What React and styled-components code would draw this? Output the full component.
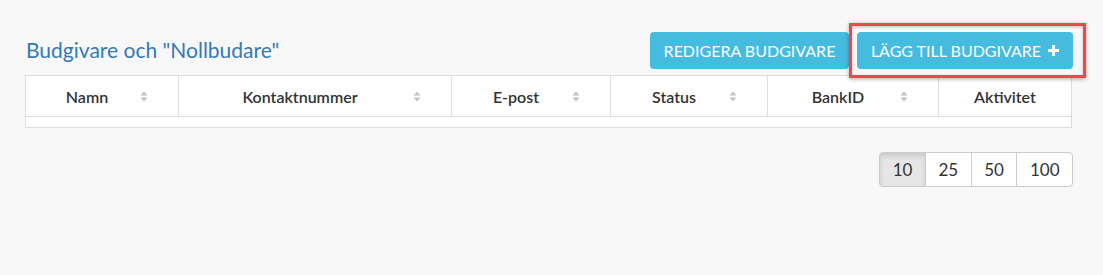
import React from 'react';
import styled, { createGlobalStyle } from 'styled-components';

const GlobalStyle = createGlobalStyle`
    body {
        margin: 0;
        background: #f8f8f8;
        font-family: Lato, "Open Sans", sans-serif;
        color: #333;
    }
`

const columns = [
    { label: 'Namn', width: 153, sortable: true },
    { label: 'Kontaktnummer', width: 273, sortable: true },
    { label: 'E-post', width: 159, sortable: true },
    { label: 'Status', width: 157, sortable: true },
    { label: 'BankID', width: 171, sortable: true },
    { label: 'Aktivitet', width: 133, sortable: false },
];

const pageSizes = [10, 25, 50, 100];

function SortIcon() {
    return (
        <SortMark width="8" height="11" viewBox="0 0 8 11">
            <path d="M4 0.5 L7.5 4.5 L0.5 4.5 Z" fill="#c4c4c4" />
            <path d="M4 10.5 L7.5 6.5 L0.5 6.5 Z" fill="#c4c4c4" />
        </SortMark>
    )
}

function App() {
    return (
        <Page>
            <GlobalStyle />
            <Toolbar>
                <Title>Budgivare och "Nollbudare"</Title>
                <Actions>
                    <ActionButton width={199}>Redigera budgivare</ActionButton>
                    <Highlighted>
                        <ActionButton width={216}>
                            Lägg till budgivare
                            <PlusIcon width="11" height="11" viewBox="0 0 11 11">
                                <path d="M4 0 H7 V4 H11 V7 H7 V11 H4 V7 H0 V4 H4 Z" fill="#fff" />
                            </PlusIcon>
                        </ActionButton>
                        <Marker />
                    </Highlighted>
                </Actions>
            </Toolbar>
            <Table>
                <thead>
                    <tr>
                        {columns.map((col) => (
                            <Th key={col.label} style={{ width: col.width }} $sortable={col.sortable}>
                                {col.label}
                                {col.sortable && <SortIcon />}
                            </Th>
                        ))}
                    </tr>
                </thead>
                <tbody>
                    <tr>
                        <EmptyCell colSpan={columns.length} />
                    </tr>
                </tbody>
            </Table>
            <Footer>
                <PageSizes>
                    {pageSizes.map((size) => (
                        <PageButton key={size} $active={size === 10}>{size}</PageButton>
                    ))}
                </PageSizes>
            </Footer>
        </Page>
    )
}

export default App

const Page = styled.div`
    width: 1047px;
    padding: 32px 0 0 25px;
    height: 243px;
`

const Toolbar = styled.div`
    display: flex;
    justify-content: space-between;
    align-items: flex-start;
    margin-bottom: 6px;
`

const Title = styled.h3`
    margin: 5px 0 0 1px;
    font-size: 21px;
    font-weight: 400;
    color: #337ab7;
    line-height: 25px;
`

const Actions = styled.div`
    display: flex;
    gap: 8px;
    margin-right: -1px;
`

const ActionButton = styled.button`
    display: flex;
    align-items: center;
    justify-content: center;
    gap: 7px;
    width: ${props => props.width}px;
    height: 37px;
    padding: 0;
    border: none;
    border-radius: 4px;
    background: #45bbdf;
    color: #fff;
    font-family: Lato, sans-serif;
    font-size: 16px;
    text-transform: uppercase;
    cursor: pointer;
`

const PlusIcon = styled.svg`
    display: block;
`

const Highlighted = styled.div`
    position: relative;
`

const Marker = styled.div`
    position: absolute;
    inset: -9px -13px -9px -8px;
    border: 3px solid #f2464b;
    box-shadow: 0 1px 4px rgba(0, 0, 0, .35), inset 0 1px 3px rgba(0, 0, 0, .25);
    pointer-events: none;
`

const Table = styled.table`
    width: 1047px;
    border-collapse: collapse;
    background: #fff;
    border: 1px solid #ddd;
    table-layout: fixed;
`

const Th = styled.th`
    position: relative;
    height: 41px;
    padding: 0 ${props => props.$sortable ? '40px' : '10px'} 0 10px;
    border-left: 1px solid #ddd;
    border-bottom: 1px solid #ddd;
    font-size: 16px;
    font-weight: 600;
    color: #333;
    text-align: center;
    box-sizing: border-box;

    &:first-child {
        border-left: none;
    }
`

const SortMark = styled.svg`
    position: absolute;
    right: 30px;
    top: 50%;
    margin-top: -5px;
`

const EmptyCell = styled.td`
    height: 10px;
    padding: 0;
`

const Footer = styled.div`
    display: flex;
    justify-content: flex-end;
    margin-top: 24px;
    margin-right: -1px;
`

const PageSizes = styled.div`
    display: flex;
`

const PageButton = styled.button`
    height: 35px;
    padding: 0 12.5px;
    margin-left: -1px;
    border: 1px solid #ccc;
    background: ${props => props.$active ? '#e6e6e6' : '#fff'};
    box-shadow: ${props => props.$active ? 'inset 0 3px 5px rgba(0, 0, 0, .125)' : 'none'};
    color: #333;
    font-family: Lato, sans-serif;
    font-size: 17px;
    cursor: pointer;

    &:first-child {
        border-radius: 4px 0 0 4px;
    }

    &:last-child {
        border-radius: 0 4px 4px 0;
    }
`
